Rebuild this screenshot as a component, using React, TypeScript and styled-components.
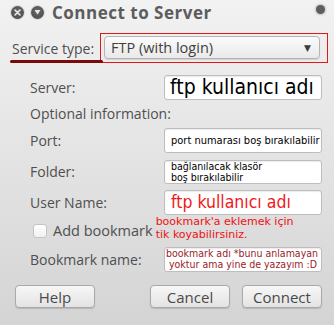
import React from 'react';
import styled, { createGlobalStyle } from 'styled-components';

const GlobalStyle = createGlobalStyle`
  html, body {
    margin: 0;
    padding: 0;
  }
  body {
    font-family: "Open Sans", "DejaVu Sans", sans-serif;
  }
`;

const Window = styled.div`
  width: 334px;
  height: 325px;
  box-sizing: border-box;
  background: linear-gradient(180deg, #f2f2f2 0%, #e6e6e6 40%, #d4d4d4 100%);
  display: flex;
  flex-direction: column;
  color: #4f4f4f;
  overflow: hidden;
`;

const TitleBar = styled.div`
  height: 24px;
  display: flex;
  align-items: center;
  padding: 0 9px 0 11px;
  gap: 7px;
`;

const WinButton = styled.div`
  width: 13px;
  height: 13px;
  border-radius: 50%;
  background: radial-gradient(circle at 50% 40%, #6a6a6a, #444);
  box-shadow: 0 0 0 1px #d8d8d8;
  display: flex;
  align-items: center;
  justify-content: center;
  svg {
    display: block;
  }
`;

const Title = styled.div`
  flex: 1;
  margin-left: 1px;
  font-size: 17px;
  font-weight: 700;
  color: #5c5c5c;
  letter-spacing: 0.5px;
`;

const Dot = styled.div`
  width: 9px;
  height: 9px;
  border-radius: 50%;
  background: #5e5e5e;
  box-shadow: 0 0 2px 1px #c4c4c4;
  margin-top: -6px;
`;

const ServiceRow = styled.div`
  display: flex;
  align-items: center;
  height: 30px;
  margin-top: 9px;
  padding-left: 12px;
`;

const ServiceLabel = styled.div`
  position: relative;
  width: 88px;
  font-size: 14px;
  color: #4f4f4f;
  white-space: nowrap;
  &::after {
    content: '';
    position: absolute;
    left: -2px;
    right: -3px;
    bottom: -5px;
    height: 3px;
    border-radius: 2px;
    background: #7a0a0a;
  }
`;

const RedFrame = styled.div`
  width: 228px;
  height: 30px;
  box-sizing: border-box;
  border: 1px solid #e21818;
  padding: 2px 7px 4px 3px;
`;

const Combo = styled.div`
  height: 23px;
  box-sizing: border-box;
  border: 1px solid #b4b4b4;
  border-radius: 4px;
  background: linear-gradient(180deg, #fbfbfb 0%, #e9e9e9 100%);
  box-shadow: 0 1px 1px rgba(0, 0, 0, 0.12);
  display: flex;
  align-items: center;
  justify-content: space-between;
  padding: 0 8px 0 6px;
  font-size: 14.5px;
  color: #3f3f3f;
`;

const Arrow = styled.span`
  font-size: 9px;
  color: #3c3c3c;
  font-family: "DejaVu Sans", sans-serif;
`;

const Form = styled.div`
  display: grid;
  grid-template-columns: 134px 158px;
  grid-template-rows: 26px 28px 25px 31px 31px 30px 27px;
  padding-left: 30px;
  margin-top: 11px;
`;

const Label = styled.div`
  font-size: 14px;
  line-height: 25px;
  color: #4f4f4f;
  white-space: nowrap;
  align-self: end;
`;

const Section = styled(Label)`
  grid-column: 1 / span 2;
  align-self: center;
  line-height: 18px;
`;

const Field = styled.div<{ $size: number; $color?: string; $pad?: string; $h?: number }>`
  align-self: end;
  height: ${p => p.$h || 25}px;
  box-sizing: border-box;
  background: #fff;
  border: 1px solid #bdbdbd;
  border-radius: 3px;
  box-shadow: inset 0 1px 1px rgba(0, 0, 0, 0.08);
  font-family: "DejaVu Sans Condensed", "DejaVu Sans", sans-serif;
  font-stretch: condensed;
  font-size: ${p => p.$size}px;
  line-height: ${p => (p.$size > 14 ? 22 : 11)}px;
  color: ${p => p.$color || '#000'};
  padding: ${p => p.$pad || '1px 6px'};
  white-space: nowrap;
  overflow: hidden;
  display: flex;
  flex-direction: column;
  justify-content: center;
`;

const CheckRow = styled.div`
  grid-column: 1 / span 2;
  display: flex;
  align-items: center;
  margin-left: 3px;
`;

const Check = styled.span`
  width: 12px;
  height: 12px;
  border: 1px solid #c4c4c4;
  border-radius: 3px;
  background: linear-gradient(180deg, #fff, #f0f0f0);
  margin-right: 6px;
  margin-top: 1px;
`;

const CheckLabel = styled.span`
  font-size: 14.5px;
  color: #4f4f4f;
  white-space: nowrap;
`;

const Note = styled.div`
  margin-left: 3px;
  font-family: "DejaVu Sans", Verdana, sans-serif;
  font-size: 11px;
  line-height: 13px;
  color: #f01010;
  white-space: nowrap;
  margin-top: -5px;
`;

const Buttons = styled.div`
  display: flex;
  padding: 0 12px 0 15px;
  margin-top: 13px;
  gap: 12px;
`;

const Button = styled.div<{ $push?: boolean }>`
  width: 80px;
  height: 23px;
  box-sizing: border-box;
  border: 1px solid #a9a9a9;
  border-radius: 4px;
  background: linear-gradient(180deg, #f7f7f7 0%, #e3e3e3 100%);
  box-shadow: 0 1px 1px rgba(0, 0, 0, 0.15);
  display: flex;
  align-items: center;
  justify-content: center;
  font-size: 15px;
  color: #4a4a4a;
  margin-left: ${p => (p.$push ? 'auto' : '0')};
`;

const App = () => {
  return (
    <>
      <GlobalStyle />
      <Window>
        <TitleBar>
          <WinButton>
            <svg width="7" height="7" viewBox="0 0 7 7">
              <path d="M1 1L6 6M6 1L1 6" stroke="#e8e8e8" strokeWidth="1.6" strokeLinecap="round" />
            </svg>
          </WinButton>
          <WinButton>
            <svg width="7" height="6" viewBox="0 0 7 6">
              <path d="M0.5 1H6.5L3.5 5.5Z" fill="#e8e8e8" />
            </svg>
          </WinButton>
          <Title>Connect to Server</Title>
          <Dot />
        </TitleBar>

        <ServiceRow>
          <ServiceLabel>Service type:</ServiceLabel>
          <RedFrame>
            <Combo>
              <span>FTP (with login)</span>
              <Arrow>▼</Arrow>
            </Combo>
          </RedFrame>
        </ServiceRow>

        <Form>
          <Label>Server:</Label>
          <Field $size={21} $pad="0 5px 2px">ftp kullanıcı adı</Field>

          <Section>Optional information:</Section>

          <Label>Port:</Label>
          <Field $size={11}>port numarası boş bırakılabilir</Field>

          <Label>Folder:</Label>
          <Field $size={10.5} $h={24} $pad="0 6px 0">
            <span>bağlanılacak klasör</span>
            <span>boş bırakılabilir</span>
          </Field>

          <Label>User Name:</Label>
          <Field $size={17.5} $color="#f01818" $pad="0 6px 1px">ftp kullanıcı adı</Field>

          <CheckRow>
            <Check />
            <CheckLabel>Add bookmark</CheckLabel>
            <Note>
              bookmark'a eklemek için
              <br />
              tik koyabilirsiniz.
            </Note>
          </CheckRow>

          <Label>Bookmark name:</Label>
          <Field $size={10.5} $color="#9a1c28" $pad="0 1px 1px">
            <span>bookmark adı *bunu anlamayan</span>
            <span>&nbsp;yoktur ama yine de yazayım :D</span>
          </Field>
        </Form>

        <Buttons>
          <Button>Help</Button>
          <Button $push>Cancel</Button>
          <Button>Connect</Button>
        </Buttons>
      </Window>
    </>
  );
};

export default App;
